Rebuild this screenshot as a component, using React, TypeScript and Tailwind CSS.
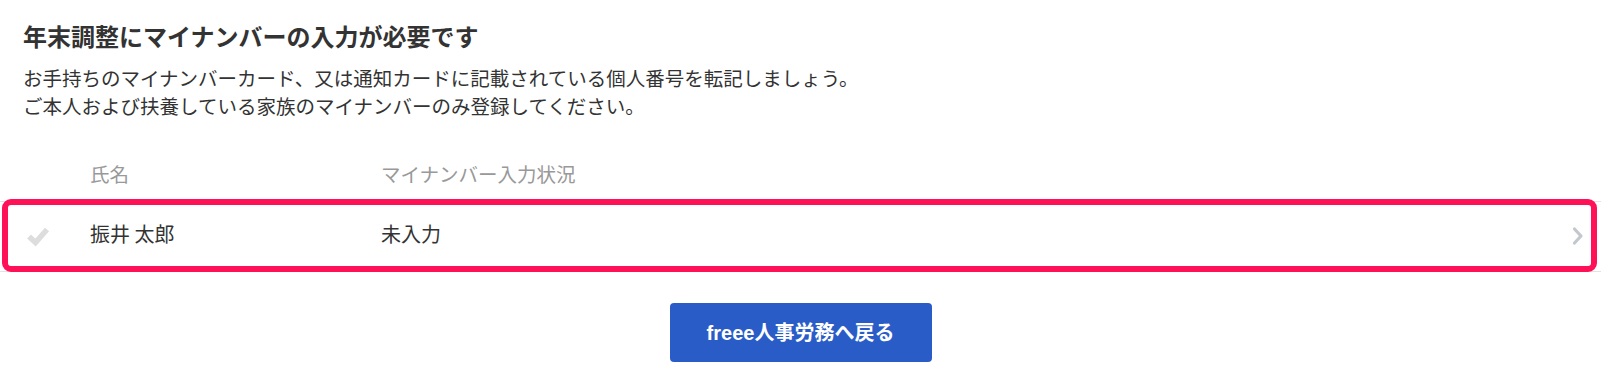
import React from "react";

const font = { fontFamily: '"Noto Sans CJK JP", "Noto Sans", sans-serif' };
const btnFont = { fontFamily: '"Liberation Sans", "Noto Sans CJK JP", sans-serif' };

function Check() {
  return (
    <svg width="26" height="24" viewBox="0 0 26 24" fill="none">
      <path d="M4 12.5 L10.5 18.5 L22 5.5" stroke="#dddddd" strokeWidth="5.5" strokeLinecap="butt" strokeLinejoin="miter" />
    </svg>
  );
}

function Chevron() {
  return (
    <svg width="14" height="20" viewBox="0 0 14 20" fill="none">
      <path d="M3.5 3 L10 10 L3.5 17" stroke="#c3c7ce" strokeWidth="3.2" strokeLinecap="round" strokeLinejoin="round" />
    </svg>
  );
}

export default function App() {
  return (
    <div className="w-[1601px] h-[386px] bg-white text-[#333333] overflow-hidden" style={font}>
      <div className="px-[23px] pt-[18px]">
        <h1 className="text-[24px] leading-[36px] font-bold text-[#333333]">年末調整にマイナンバーの入力が必要です</h1>
        <div className="mt-[10px] text-[19.5px] leading-[28px] text-[#333333]">
          <p>お手持ちのマイナンバーカード、又は通知カードに記載されている個人番号を転記しましょう。</p>
          <p>ご本人および扶養している家族のマイナンバーのみ登録してください。</p>
        </div>
      </div>

      <div className="mt-[29px]">
        <div className="flex items-center h-[52px] pb-[2px] text-[19.5px] text-[#999999]">
          <div className="w-[90px] shrink-0" />
          <div className="w-[291px] shrink-0">氏名</div>
          <div className="flex-1">マイナンバー入力状況</div>
        </div>
        <div className="relative flex items-center h-[71px] pb-[6px] border-t border-b border-[#e3e3e3] text-[20px] text-[#333333]">
          <div className="w-[90px] shrink-0 flex justify-center pr-[14px] pt-[4px]">
            <Check />
          </div>
          <div className="w-[291px] shrink-0">振井 太郎</div>
          <div className="flex-1">未入力</div>
          <div className="w-[36px] shrink-0 flex justify-center pr-[10px] pt-[4px]">
            <Chevron />
          </div>
          <div className="absolute -top-[3px] -bottom-[1px] left-[2px] right-[4px] border-[6px] border-[#ff1158] rounded-[9px] pointer-events-none" />
        </div>
      </div>

      <div className="flex justify-center mt-[31px]">
        <button className="w-[262px] h-[59px] rounded-[4px] bg-[#2a5cc8] text-white text-[20px] font-bold" style={btnFont}>
          freee人事労務へ戻る
        </button>
      </div>
    </div>
  );
}
